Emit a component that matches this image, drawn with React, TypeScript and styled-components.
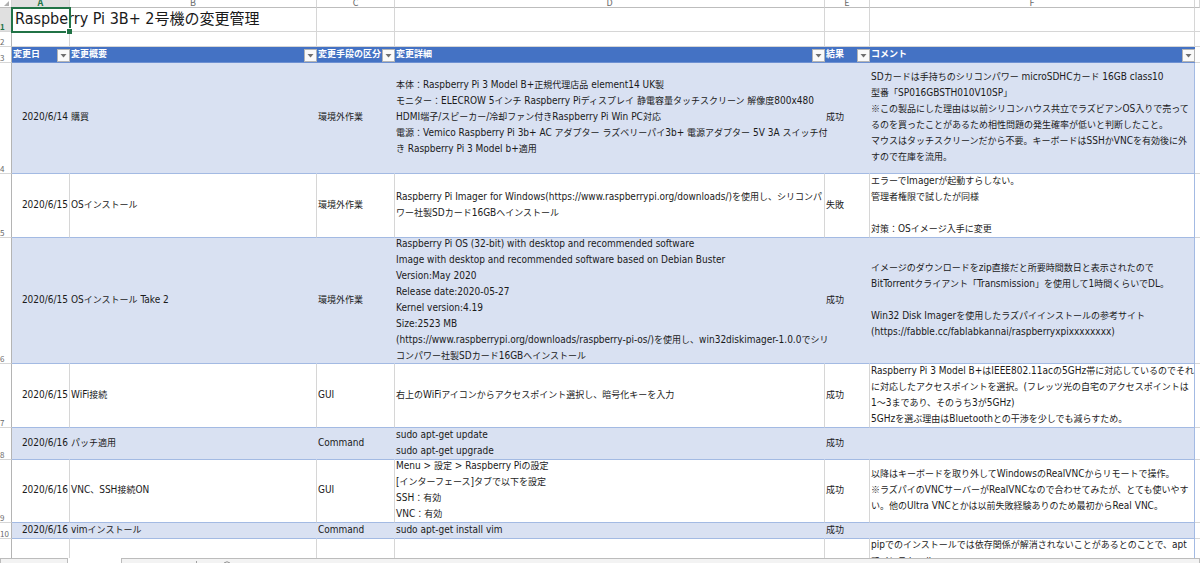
import React from "react";
import styled, { createGlobalStyle } from "styled-components";

const GRID = "#d6d6d6";
const TABLE_LINE = "#a3bae3";
const BAND = "#d9e1f2";
const HEADER = "#4472c4";
const GREEN = "#217346";

const GlobalStyle = createGlobalStyle`
  * { box-sizing: border-box; }
  body {
    margin: 0;
    background: #fff;
    color: #1a1a1a;
    font-family: "Noto Sans CJK JP", "Noto Sans", sans-serif;
    font-size: 9px;
    line-height: 16px;
  }
`;

const Page = styled.div`
  display: flex;
  flex-direction: column;
  height: 100vh;
  overflow: hidden;
`;

const SheetArea = styled.main`
  flex: 1;
  min-height: 0;
  overflow: hidden;
`;

const Grid = styled.table`
  width: 100%;
  min-width: 900px;
  table-layout: fixed;
  border-collapse: separate;
  border-spacing: 0;
`;

const Col = styled.col<{ $w?: number }>`
  width: ${(p) => (p.$w ? `${p.$w}px` : "auto")};
`;

const SheetRow = styled.tr<{ $h: number }>`
  height: ${(p) => p.$h}px;
`;

const ColumnHead = styled.th<{ $active?: boolean }>`
  height: 8px;
  padding: 0;
  border-right: 1px solid ${GRID};
  border-bottom: 1px solid #bdbdbd;
  background: ${(p) => (p.$active ? "#e0e0e0" : "#fff")};
  color: ${(p) => (p.$active ? GREEN : "#6a6a6a")};
  font-weight: ${(p) => (p.$active ? 700 : 400)};
`;

const ColumnLetter = styled.div`
  display: flex;
  align-items: flex-end;
  justify-content: center;
  height: 7px;
  overflow: hidden;
  font-size: 9px;
  line-height: 8px;
`;

const CornerMark = styled.svg`
  display: block;
  width: 6px;
  height: 6px;
  margin-left: 4px;
`;

const RowHead = styled.th<{ $active?: boolean }>`
  padding: 0;
  border-right: 1px solid #b4b4b4;
  border-bottom: 1px solid ${GRID};
  background: ${(p) => (p.$active ? "#e0e0e0" : "#fff")};
  color: ${(p) => (p.$active ? GREEN : "#6a6a6a")};
  font-size: 8px;
  font-weight: ${(p) => (p.$active ? 700 : 400)};
  line-height: 9px;
  text-align: left;
  vertical-align: bottom;
`;

const Blank = styled.td<{ $last?: boolean }>`
  padding: 0;
  border-right: ${(p) => (p.$last ? "0" : `1px solid ${GRID}`)};
  border-bottom: 1px solid ${GRID};
`;

const TitleCell = styled(Blank)`
  position: relative;
`;

const Title = styled.h1`
  margin: 0;
  padding: 0 0 3px 3px;
  font-size: 15px;
  font-weight: 400;
  line-height: 20px;
  white-space: nowrap;
`;

const Selection = styled.span`
  position: absolute;
  inset: -1px -2px -2px -1px;
  border: 2px solid ${GREEN};

  &::after {
    content: "";
    position: absolute;
    right: -3px;
    bottom: -3px;
    width: 5px;
    height: 5px;
    border-top: 1px solid #fff;
    border-left: 1px solid #fff;
    background: ${GREEN};
  }
`;

const HeadCell = styled.th`
  padding: 0;
  border-bottom: 1px solid #6d90d2;
  background: ${HEADER};
  color: #fff;
  text-align: left;
`;

const HeadInner = styled.div`
  display: flex;
  align-items: flex-start;
  justify-content: space-between;
  height: 15px;
  padding-left: 1px;
  font-size: 9px;
  line-height: 14px;
  white-space: nowrap;
`;

const FilterButton = styled.button`
  display: flex;
  flex: none;
  align-self: flex-end;
  align-items: center;
  justify-content: center;
  width: 13px;
  height: 13px;
  padding: 0;
  border: 1px solid #b4b4b4;
  background: #fafafa;
`;

const DataCell = styled.td<{ $band: boolean; $end?: boolean }>`
  padding: 0;
  border-right: 1px solid ${(p) => (p.$end ? TABLE_LINE : p.$band ? BAND : GRID)};
  border-bottom: 1px solid ${TABLE_LINE};
  background: ${(p) => (p.$band ? BAND : "#fff")};
`;

const CellBody = styled.div<{ $h: number }>`
  display: flex;
  flex-direction: column;
  justify-content: center;
  height: ${(p) => p.$h - 1}px;
  padding: 0 1px 2px;
`;

const Line = styled.div<{ $right?: boolean }>`
  flex: none;
  height: 16px;
  text-align: ${(p) => (p.$right ? "right" : "left")};
  white-space: pre;
`;

const Latin = styled.span`
  font-family: "DejaVu Sans Condensed", "DejaVu Sans", sans-serif;
  font-size: 10px;
  line-height: 1;
`;

const TitleLatin = styled(Latin)`
  font-size: 16px;
`;

const TabBar = styled.footer`
  display: flex;
  flex: none;
  height: 5px;
  background: #fff;
`;

const TabStub = styled.div<{ $w?: number }>`
  flex: ${(p) => (p.$w ? `0 0 ${p.$w}px` : "1")};
  border: 1px solid #bcbcbc;
  border-bottom: 0;
  background: #f3f3f3;
`;

const ActiveTab = styled.div`
  flex: 0 0 53px;
`;

const TabMarks = styled.svg`
  display: block;
  width: 120px;
  height: 4px;
`;

/** Sets western runs in the latin face and leaves Japanese runs in the sheet font. */
function Mixed({ text }: { text: string }) {
  const runs = text.match(/[\x20-\x7e]+|[^\x20-\x7e]+/g) ?? [];
  return (
    <>
      {runs.map((run, i) =>
        /^[\x20-\x7e]/.test(run) ? <Latin key={i}>{run}</Latin> : run
      )}
    </>
  );
}

type Row = { n: number; h: number; cells: string[] };

const headings = ["変更日", "変更概要", "変更手段の区分", "変更詳細", "結果", "コメント"];

const rows: Row[] = [
  {
    n: 4,
    h: 111,
    cells: [
      "2020/6/14",
      "購買",
      "環境外作業",
      "本体：Raspberry Pi 3 Model B+正規代理店品 element14 UK製\nモニター：ELECROW 5インチ Raspberry Piディスプレイ 静電容量タッチスクリーン 解像度800x480\nHDMI端子/スピーカー/冷却ファン付きRaspberry Pi Win PC対応\n電源：Vemico Raspberry Pi 3b+ AC アダプター ラズベリーパイ3b+ 電源アダプター 5V 3A スイッチ付\nき Raspberry Pi 3 Model b+適用",
      "成功",
      "SDカードは手持ちのシリコンパワー microSDHCカード 16GB class10\n型番「SP016GBSTH010V10SP」\n※この製品にした理由は以前シリコンハウス共立でラズビアンOS入りで売って\nるのを買ったことがあるため相性問題の発生確率が低いと判断したこと。\nマウスはタッチスクリーンだから不要。キーボードはSSHかVNCを有効後に外\nすので在庫を流用。",
    ],
  },
  {
    n: 5,
    h: 64,
    cells: [
      "2020/6/15",
      "OSインストール",
      "環境外作業",
      "Raspberry Pi Imager for Windows(https://www.raspberrypi.org/downloads/)を使用し、シリコンパ\nワー社製SDカード16GBへインストール",
      "失敗",
      "エラーでImagerが起動すらしない。\n管理者権限で試したが同様\n\n対策：OSイメージ入手に変更",
    ],
  },
  {
    n: 6,
    h: 126,
    cells: [
      "2020/6/15",
      "OSインストール Take 2",
      "環境外作業",
      "Raspberry Pi OS (32-bit) with desktop and recommended software\nImage with desktop and recommended software based on Debian Buster\nVersion:May 2020\nRelease date:2020-05-27\nKernel version:4.19\nSize:2523 MB\n(https://www.raspberrypi.org/downloads/raspberry-pi-os/)を使用し、win32diskimager-1.0.0でシリ\nコンパワー社製SDカード16GBへインストール",
      "成功",
      "イメージのダウンロードをzip直接だと所要時間数日と表示されたので\nBitTorrentクライアント「Transmission」を使用して1時間くらいでDL。\n\nWin32 Disk Imagerを使用したラズパイインストールの参考サイト\n(https://fabble.cc/fablabkannai/raspberryxpixxxxxxxx)",
    ],
  },
  {
    n: 7,
    h: 64,
    cells: [
      "2020/6/15",
      "WiFi接続",
      "GUI",
      "右上のWiFiアイコンからアクセスポイント選択し、暗号化キーを入力",
      "成功",
      "Raspberry Pi 3 Model B+はIEEE802.11acの5GHz帯に対応しているのでそれ\nに対応したアクセスポイントを選択。(フレッツ光の自宅のアクセスポイントは\n1～3まであり、そのうち3が5GHz)\n5GHzを選ぶ理由はBluetoothとの干渉を少しでも減らすため。",
    ],
  },
  {
    n: 8,
    h: 32,
    cells: ["2020/6/16", "パッチ適用", "Command", "sudo apt-get update\nsudo apt-get upgrade", "成功", ""],
  },
  {
    n: 9,
    h: 63,
    cells: [
      "2020/6/16",
      "VNC、SSH接続ON",
      "GUI",
      "Menu > 設定 > Raspberry Piの設定\n[インターフェース]タブで以下を設定\nSSH：有効\nVNC：有効",
      "成功",
      "以降はキーボードを取り外してWindowsのRealVNCからリモートで操作。\n※ラズパイのVNCサーバーがRealVNCなので合わせてみたが、とても使いやす\nい。他のUltra VNCとかは以前失敗経験ありのため最初からReal VNC。",
    ],
  },
  {
    n: 10,
    h: 16,
    cells: ["2020/6/16", "vimインストール", "Command", "sudo apt-get install vim", "成功", ""],
  },
  {
    n: 11,
    h: 30,
    cells: ["", "", "", "", "", "pipでのインストールでは依存関係が解消されないことがあるとのことで、apt\nでインストール。"],
  },
];

export default function App() {
  return (
    <Page>
      <GlobalStyle />
      <SheetArea>
        <Grid>
          <colgroup>
            <Col $w={12} />
            <Col $w={58} />
            <Col $w={247} />
            <Col $w={78} />
            <Col />
            <Col $w={45} />
            <Col $w={325} />
            <Col $w={5} />
          </colgroup>
          <thead>
            <tr>
              <ColumnHead>
                <CornerMark viewBox="0 0 6 6" aria-hidden="true">
                  <path d="M5 0V5H0Z" fill="#b0b0b0" />
                </CornerMark>
              </ColumnHead>
              {["A", "B", "C", "D", "E", "F", ""].map((letter) => (
                <ColumnHead key={letter} $active={letter === "A"}>
                  <ColumnLetter>{letter}</ColumnLetter>
                </ColumnHead>
              ))}
            </tr>
          </thead>
          <tbody>
            <SheetRow $h={24}>
              <RowHead $active>1</RowHead>
              <TitleCell>
                <Title>
                  <TitleLatin>Raspberry Pi 3B+ 2</TitleLatin>号機の変更管理
                </Title>
                <Selection />
              </TitleCell>
              <Blank />
              <Blank />
              <Blank />
              <Blank />
              <Blank />
              <Blank $last />
            </SheetRow>
            <SheetRow $h={15}>
              <RowHead>2</RowHead>
              <Blank />
              <Blank />
              <Blank />
              <Blank />
              <Blank />
              <Blank />
              <Blank $last />
            </SheetRow>
            <SheetRow $h={16}>
              <RowHead>3</RowHead>
              {headings.map((label) => (
                <HeadCell key={label}>
                  <HeadInner>
                    {label}
                    <FilterButton type="button" aria-label={`${label}のフィルター`}>
                      <svg width="7" height="4" viewBox="0 0 7 4" aria-hidden="true">
                        <path d="M0.5 0H6.5L3.5 3.5Z" fill="#707070" />
                      </svg>
                    </FilterButton>
                  </HeadInner>
                </HeadCell>
              ))}
              <Blank $last />
            </SheetRow>
            {rows.map((row, i) => (
              <SheetRow key={row.n} $h={row.h}>
                <RowHead>{row.n}</RowHead>
                {row.cells.map((text, c) => (
                  <DataCell key={c} $band={i % 2 === 0} $end={c === 5}>
                    <CellBody $h={row.h}>
                      {text.split("\n").map((line, l) => (
                        <Line key={l} $right={c === 0}>
                          <Mixed text={line} />
                        </Line>
                      ))}
                    </CellBody>
                  </DataCell>
                ))}
                <Blank $last />
              </SheetRow>
            ))}
          </tbody>
        </Grid>
      </SheetArea>
      <TabBar>
        <TabStub $w={68} />
        <ActiveTab />
        <TabStub>
          <TabMarks viewBox="0 0 120 4" aria-hidden="true">
            <path d="M74.5 2V4" stroke="#a0a0a0" />
            <path d="M102 4Q105 1.5 108 4" fill="none" stroke="#909090" />
          </TabMarks>
        </TabStub>
      </TabBar>
    </Page>
  );
}
